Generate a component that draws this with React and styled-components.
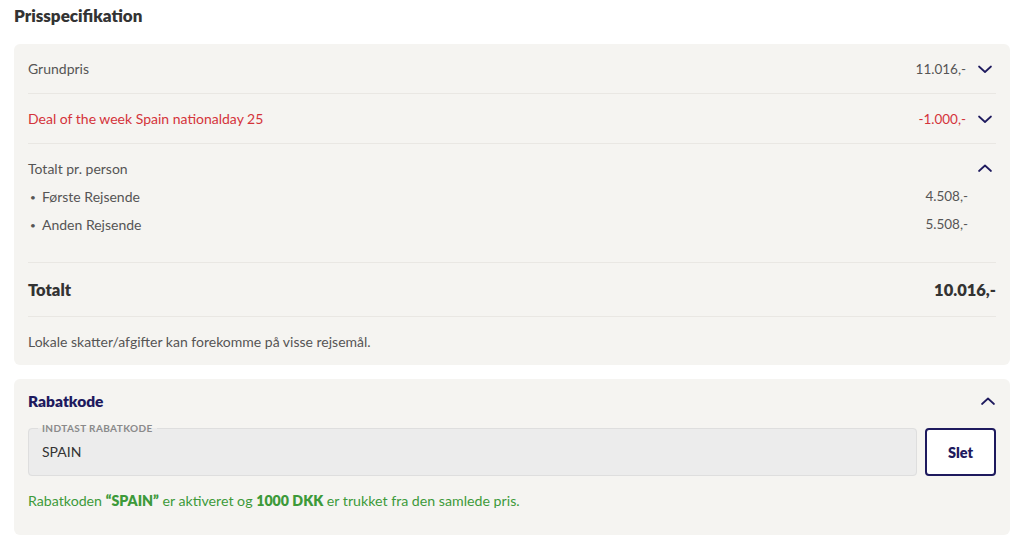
import React from 'react';
import styled, { createGlobalStyle } from 'styled-components';

const GlobalStyle = createGlobalStyle`
  body {
    margin: 0;
    background: #fff;
    font-family: Lato, "Open Sans", sans-serif;
    color: #4a4a4a;
  }
`;

const Chevron = ({ up }) => (
  <svg width="16" height="10" viewBox="0 0 16 10" fill="none">
    <path
      d={up ? 'M2 8L8 2.5L14 8' : 'M2 2.5L8 8L14 2.5'}
      stroke="#1e1a5e"
      strokeWidth="1.7"
      strokeLinecap="round"
      strokeLinejoin="round"
    />
  </svg>
);

const Page = styled.div`
  padding: 6px 14px;
  width: 996px;
`;

const Title = styled.h2`
  margin: 0;
  font-size: 17px;
  font-weight: 800;
  color: #333;
  line-height: 20px;
`;

const Card = styled.section`
  background: #f5f4f1;
  border-radius: 6px;
  padding: 0 14px;
  margin-top: ${(p) => p.$mt || 0}px;
`;

const Row = styled.div`
  display: flex;
  align-items: center;
  height: 49px;
  border-bottom: 1px solid #e9e7e3;
  color: ${(p) => (p.$red ? '#d4333a' : '#555')};
  font-size: 14px;
`;

const Label = styled.div`
  flex: 1;
`;

const Value = styled.div`
  text-align: right;
  font-size: 13.5px;
`;

const IconSlot = styled.div`
  width: 30px;
  padding-right: 3px;
  box-sizing: border-box;
  display: flex;
  justify-content: flex-end;
  align-items: center;
`;

const Group = styled.div`
  padding: 14px 0 24px;
  border-bottom: 1px solid #e9e7e3;
`;

const GroupHead = styled.div`
  display: flex;
  align-items: center;
  height: 20px;
  font-size: 14px;
  color: #555;
  margin-bottom: 4px;
`;

const Item = styled.div`
  display: flex;
  align-items: center;
  height: 28px;
  font-size: 14px;
  color: #555;
  padding-right: 28px;
`;

const Bullet = styled.span`
  width: 14px;
  &::before {
    content: '•';
    font-size: 10px;
    position: relative;
    top: -1px;
    left: 2px;
  }
`;

const TotalRow = styled.div`
  display: flex;
  align-items: center;
  justify-content: space-between;
  height: 53px;
  border-bottom: 1px solid #e9e7e3;
  font-weight: 800;
  font-size: 16.5px;
  color: #333;
`;

const Note = styled.div`
  font-size: 14px;
  line-height: 20px;
  color: #555;
  padding: 15px 0 13px;
`;

const RabatHead = styled.div`
  display: flex;
  align-items: center;
  justify-content: space-between;
  height: 43px;
  font-weight: 800;
  font-size: 15.5px;
  color: #1e1a5e;
`;

const FormRow = styled.div`
  display: flex;
  gap: 8px;
  align-items: flex-start;
`;

const Field = styled.fieldset`
  flex: 1;
  margin: 0;
  height: 54px;
  box-sizing: border-box;
  border: 1px solid #dedede;
  border-radius: 4px;
  background: #ececec;
  padding: 0 13px;
  legend {
    font-size: 10px;
    line-height: 12px;
    font-weight: 700;
    letter-spacing: 0.4px;
    color: #8a8a8a;
    padding: 0 4px;
    margin-left: -4px;
  }
`;

const FieldValue = styled.div`
  font-size: 14px;
  color: #333;
  line-height: 20px;
  margin-top: 8px;
`;

const Button = styled.button`
  width: 71px;
  height: 48px;
  margin-top: 6px;
  background: #fff;
  border: 2px solid #1e1a5e;
  border-radius: 4px;
  color: #1e1a5e;
  font-family: inherit;
  font-weight: 800;
  font-size: 14.5px;
`;

const Success = styled.div`
  color: #3d9a3a;
  font-size: 14.2px;
  line-height: 20px;
  padding: 15px 0 24px;
  b {
    font-weight: 800;
  }
`;

export default function App() {
  return (
    <>
      <GlobalStyle />
      <Page>
        <Title>Prisspecifikation</Title>
        <Card $mt={18}>
          <Row>
            <Label>Grundpris</Label>
            <Value>11.016,-</Value>
            <IconSlot><Chevron /></IconSlot>
          </Row>
          <Row $red>
            <Label>Deal of the week Spain nationalday 25</Label>
            <Value>-1.000,-</Value>
            <IconSlot><Chevron /></IconSlot>
          </Row>
          <Group>
            <GroupHead>
              <Label>Totalt pr. person</Label>
              <IconSlot><Chevron up /></IconSlot>
            </GroupHead>
            <Item>
              <Bullet />
              <Label>Første Rejsende</Label>
              <Value>4.508,-</Value>
            </Item>
            <Item>
              <Bullet />
              <Label>Anden Rejsende</Label>
              <Value>5.508,-</Value>
            </Item>
          </Group>
          <TotalRow>
            <span>Totalt</span>
            <span>10.016,-</span>
          </TotalRow>
          <Note>Lokale skatter/afgifter kan forekomme på visse rejsemål.</Note>
        </Card>
        <Card $mt={14}>
          <RabatHead>
            <span>Rabatkode</span>
            <Chevron up />
          </RabatHead>
          <FormRow>
            <Field>
              <legend>INDTAST RABATKODE</legend>
              <FieldValue>SPAIN</FieldValue>
            </Field>
            <Button>Slet</Button>
          </FormRow>
          <Success>
            Rabatkoden <b>“SPAIN”</b> er aktiveret og <b>1000 DKK</b> er trukket fra den samlede pris.
          </Success>
        </Card>
      </Page>
    </>
  );
}
